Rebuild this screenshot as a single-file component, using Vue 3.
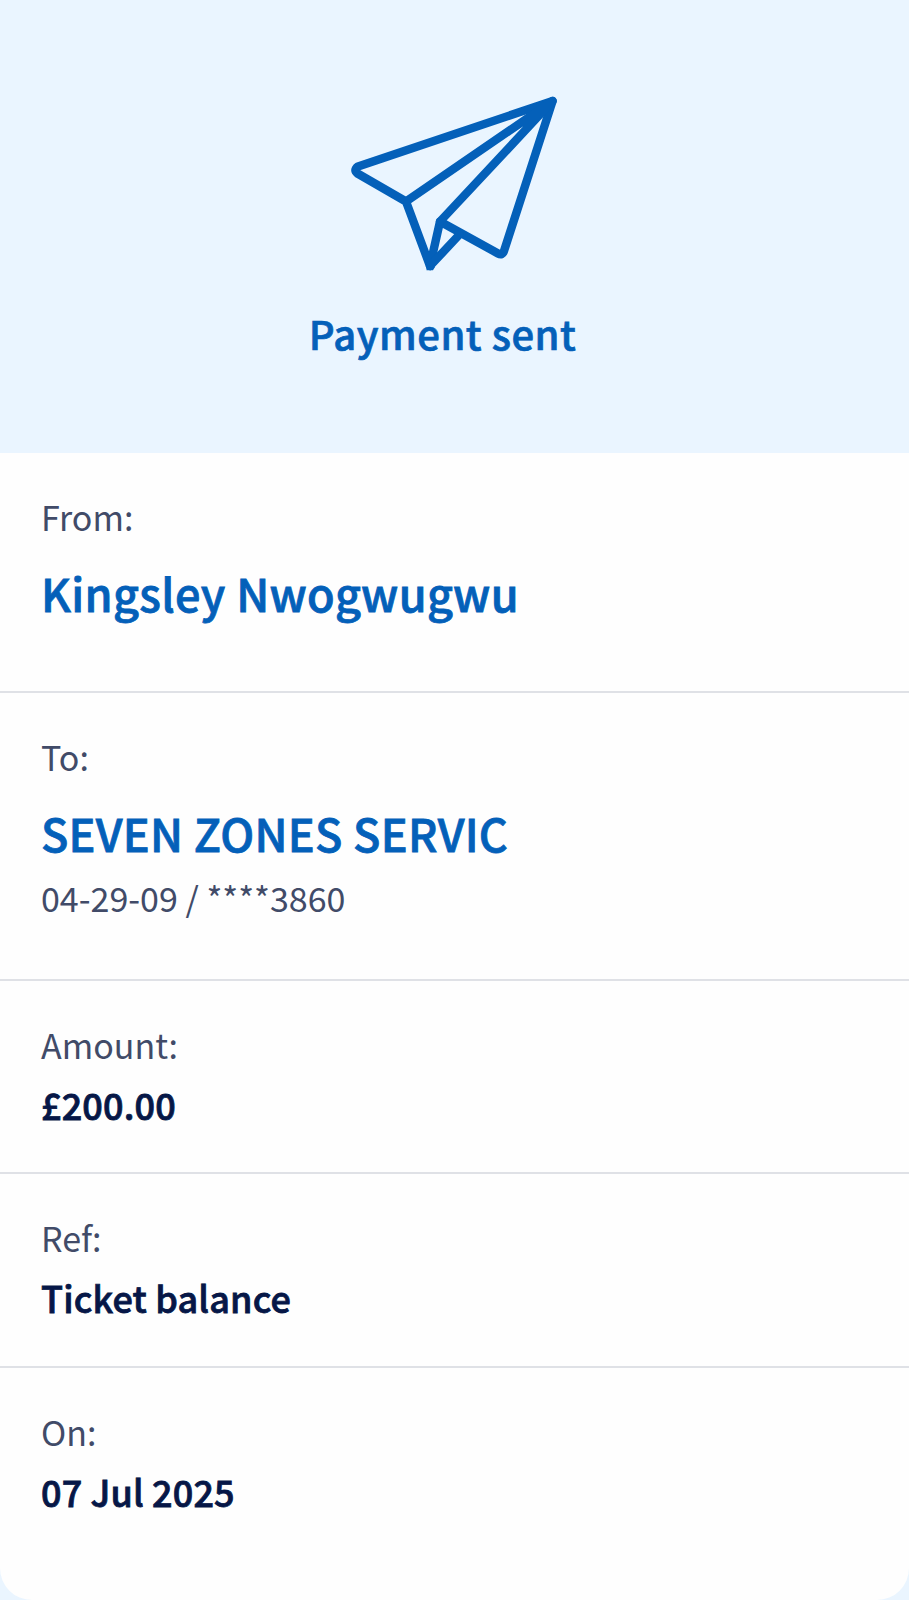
<script setup>
const rows = [
  { key: 'from', label: 'From:', value: 'Kingsley Nwogwugwu', large: true },
  { key: 'to', label: 'To:', value: 'SEVEN ZONES SERVIC', large: true, detail: '04-29-09 / ****3860' },
  { key: 'amount', label: 'Amount:', value: '£200.00' },
  { key: 'ref', label: 'Ref:', value: 'Ticket balance' },
  { key: 'on', label: 'On:', value: '07 Jul 2025' },
]
</script>

<template>
  <main class="receipt">
    <header class="hero">
      <svg class="plane" viewBox="0 0 230 195" fill="none" stroke="#0460b9" stroke-width="8.4" stroke-linejoin="round" stroke-linecap="round">
        <path d="M212.6 16 L18 81.4 Q13 85.2 17.5 88.5 L66 116.5 L90 181 L100 136.5 L158 168.5 Q162.5 171 164 166 Z" />
        <path d="M212.6 16 L66 116.5 M212.6 16 L100 136.5 M90 181 L119.5 149.5" />
        <path d="M86.5 180 V185.2 H93 L95 182 Z" fill="#0460b9" stroke="none" />
      </svg>
      <h1 class="title">Payment sent</h1>
    </header>
    <section v-for="row in rows" :key="row.key" class="row" :class="row.key">
      <div class="label">{{ row.label }}</div>
      <div class="value" :class="{ large: row.large }">{{ row.value }}</div>
      <div v-if="row.detail" class="detail">{{ row.detail }}</div>
    </section>
  </main>
</template>

<style>
body { background: #eaf5ff; }
</style>

<style scoped>
.receipt { box-sizing: border-box; width: 100%; height: 1600px; background: #fefefe; border-radius: 0 0 32px 32px; overflow: hidden; font-family: "Noto Sans CJK SC", sans-serif; color: #414b68; }
.hero { box-sizing: border-box; height: 453px; padding-top: 85px; background: #eaf5ff; display: flex; flex-direction: column; align-items: center; }
.plane { width: 230px; height: 195px; }
.title { margin: 23px 24px 0 0; font-size: 40px; line-height: 60px; font-weight: 500; letter-spacing: 0.5px; color: #0460b9; -webkit-text-stroke: 0.7px #0460b9; }
.row { box-sizing: border-box; padding: 39px 41px 0; border-bottom: 2px solid #dfe1e6; }
.from { height: 240px; }
.to { height: 288px; }
.amount { height: 193px; }
.ref { height: 194px; }
.on { border: 0; }
.label, .detail { font-size: 34px; line-height: 50px; }
.detail { margin-top: 8px; }
.value { font-size: 36px; line-height: 50px; margin-top: 9px; font-weight: 500; letter-spacing: 0.15px; color: #061747; -webkit-text-stroke: 0.8px #061747; }
.large { font-size: 45px; line-height: 64px; margin-top: 19px; letter-spacing: 0.35px; color: #0460b9; -webkit-text-stroke: 0.8px #0460b9; }
.to .large { letter-spacing: 0.25px; }
</style>
